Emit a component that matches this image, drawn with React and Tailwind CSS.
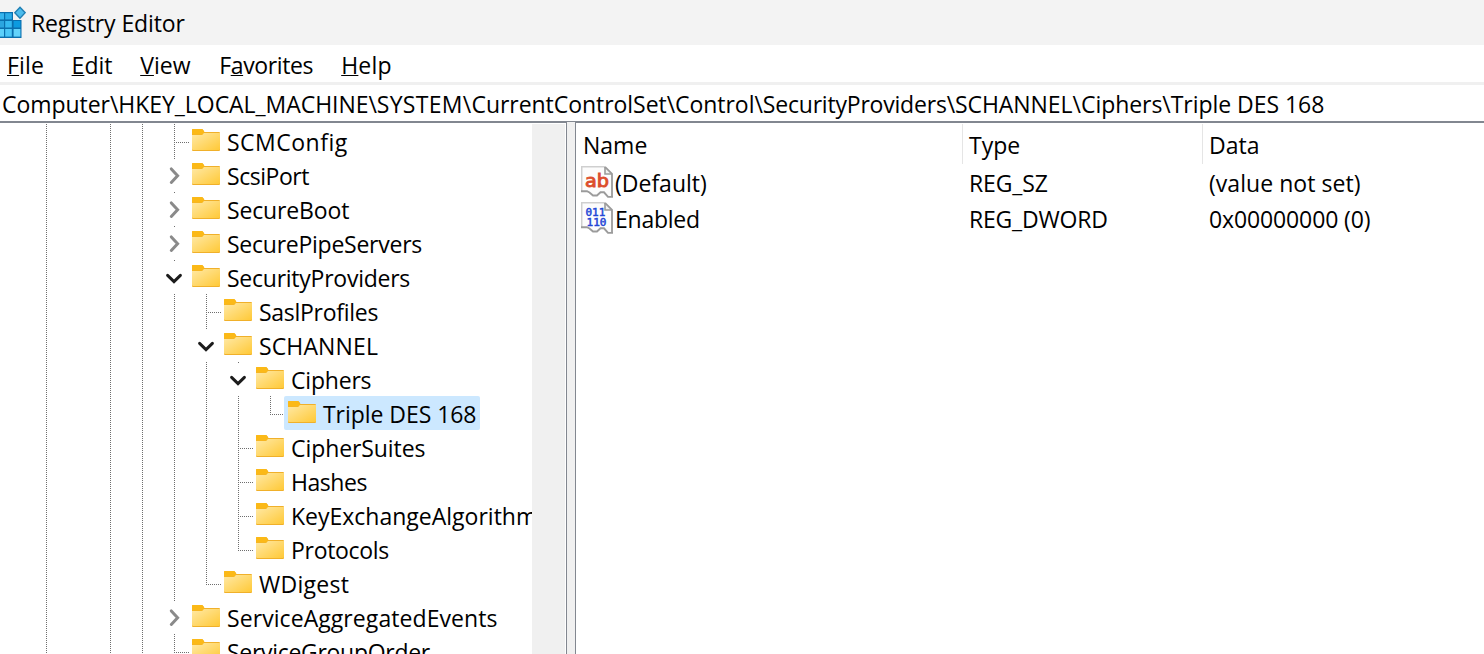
const FONT = "font-['Open_Sans','Noto_Sans',sans-serif] text-[23px] text-black";

const V_DOTS = 'bg-[repeating-linear-gradient(to_bottom,#6e6e6e_0px,#6e6e6e_1px,transparent_1px,transparent_2px)]';
const H_DOTS = 'bg-[repeating-linear-gradient(to_right,#6e6e6e_0px,#6e6e6e_1px,transparent_1px,transparent_2px)]';

// Guides, one character per 32px column:
// "|" line, " " empty, "T" branch, "L" last branch, ">" collapsed, "v" expanded
const TREE = [
  { guides: '| ||T', label: 'SCMConfig', tracking: 'tracking-[0.5px]' },
  { guides: '| ||>', label: 'ScsiPort', tracking: 'tracking-[-0.45px]' },
  { guides: '| ||>', label: 'SecureBoot', tracking: 'tracking-[-0.15px]' },
  { guides: '| ||>', label: 'SecurePipeServers', tracking: 'tracking-[-0.25px]' },
  { guides: '| ||v', label: 'SecurityProviders', tracking: 'tracking-[-0.25px]' },
  { guides: '| |||T', label: 'SaslProfiles', tracking: 'tracking-[-0.28px]' },
  { guides: '| |||v', label: 'SCHANNEL', tracking: 'tracking-[0.13px]' },
  { guides: '| ||||v', label: 'Ciphers', tracking: 'tracking-[-0.2px]' },
  { guides: '| |||||L', label: 'Triple DES 168', tracking: 'tracking-[-0.05px]', selected: true },
  { guides: '| ||||T', label: 'CipherSuites', tracking: 'tracking-[-0.08px]' },
  { guides: '| ||||T', label: 'Hashes', tracking: 'tracking-[-0.45px]' },
  { guides: '| ||||T', label: 'KeyExchangeAlgorithms', tracking: 'tracking-normal' },
  { guides: '| ||||L', label: 'Protocols', tracking: 'tracking-[-0.3px]' },
  { guides: '| |||L', label: 'WDigest', tracking: 'tracking-[0.27px]' },
  { guides: '| ||>', label: 'ServiceAggregatedEvents', tracking: 'tracking-[0.07px]' },
  { guides: '| ||L', label: 'ServiceGroupOrder', tracking: 'tracking-[-0.3px]' },
];

const MENU = [
  { pre: '', key: 'F', post: 'ile', box: 'w-[64.6px] tracking-[0.2px]' },
  { pre: '', key: 'E', post: 'dit', box: 'w-[68.6px]' },
  { pre: '', key: 'V', post: 'iew', box: 'w-[79px]' },
  { pre: 'F', key: 'a', post: 'vorites', box: 'w-[122px] tracking-[-0.36px]' },
  { pre: '', key: 'H', post: 'elp', box: 'w-[60px] tracking-[0.2px]' },
];

function RegistryLogo() {
  return (
    <svg width="26" height="32" viewBox="0 0 26 32" className="shrink-0">
      <path d="M0 6H13V14H21.5V32H0Z" fill="#0a6fae" />
      <path d="M0 7.2H4V13.4H0Z" fill="#35b5ee" />
      <path d="M5.2 7.2H11.8V13.4H5.2Z" fill="#2bade8" />
      <path d="M0 15H4V21.5H0Z" fill="#2ba5e0" />
      <path d="M5.2 15H11.8V21.5H5.2Z" fill="#35b9f1" />
      <path d="M13.6 15H20.4V21.5H13.6Z" fill="#0c9be0" />
      <path d="M0 23H4V30.6H0Z" fill="#5bd0fb" />
      <path d="M5.2 23H11.8V30.6H5.2Z" fill="#4cc8f8" />
      <path d="M13.6 23H20.4V30.6H13.6Z" fill="#63d3fb" />
      <path d="M20 1.2L25.2 6.7L20 12.2L14.8 6.7Z" fill="#4cbcec" stroke="#1f7fb4" strokeWidth="1.4" />
    </svg>
  );
}

function Folder() {
  return (
    <svg width="28" height="23" viewBox="0 0 28 23" className="mt-[5px] shrink-0">
      <defs>
        <linearGradient id="folder" x1="0" y1="0" x2="1" y2="1">
          <stop offset="0" stopColor="#ffe9a6" />
          <stop offset="1" stopColor="#ffc937" />
        </linearGradient>
      </defs>
      <path d="M0 1Q0 0 1 0H9.5Q10.5 0 11.2 1L12.5 3H27Q28 3 28 4V21Q28 22 27 22H1Q0 22 0 21Z" fill="#f0b02a" />
      <path d="M0 1Q0 0 1 0H9.5Q10.5 0 11.2 1L12.2 3L11 5.5H0Z" fill="#fbb917" />
      <path d="M0 6H9.5Q10.5 6 11.2 5L11.8 4H28V20Q28 21 27 21H1Q0 21 0 20Z" fill="url(#folder)" />
    </svg>
  );
}

function Guide({ kind }) {
  if (kind === ' ') return <span className="w-8 shrink-0" />;
  if (kind === '>' || kind === 'v') {
    return (
      <span className="flex h-[34px] w-8 shrink-0 flex-col items-center">
        <span className="h-px w-full pl-4">
          <span className="block size-px bg-[#6e6e6e]" />
        </span>
        {kind === '>' ? (
          <svg width="32" height="33" viewBox="0 0 32 33" fill="none" stroke="#8a8a8a" strokeWidth="3">
            <path d="M13.3 9.9L19.6 16.7L13.3 23.5" strokeLinecap="round" />
          </svg>
        ) : (
          <svg width="32" height="33" viewBox="0 0 32 33" fill="none" stroke="#1c1c1c" strokeWidth="3">
            <path d="M9.6 14.4L16 20.6L22.4 14.4" strokeLinecap="round" />
          </svg>
        )}
      </span>
    );
  }
  const tall = kind === 'L' ? 'h-[19px]' : 'h-[34px]';
  return (
    <span className="flex h-[34px] w-8 shrink-0 pl-4">
      <span className={`w-px shrink-0 ${tall} ${V_DOTS}`} />
      {(kind === 'T' || kind === 'L') && <span className={`mt-[18px] ml-px h-px w-[13px] shrink-0 ${H_DOTS}`} />}
    </span>
  );
}

function TreeRow({ guides, label, tracking, selected }) {
  return (
    <div className="flex h-[34px] shrink-0 pl-[30px]">
      {guides.split('').map((kind, i) => (
        <Guide key={i} kind={kind} />
      ))}
      <div className={`-ml-0.5 flex h-[34px] shrink-0 rounded-xs pr-[3.6px] pl-1 ${selected ? 'bg-[#cce8ff]' : ''}`}>
        <Folder />
        <span className={`ml-[7px] leading-[36px] whitespace-nowrap ${tracking}`}>{label}</span>
      </div>
    </div>
  );
}

function ValueIcon({ binary }) {
  return (
    <svg width="32" height="32" viewBox="0 0 32 32" className="shrink-0">
      <path d="M1 1H24L31 8V31H27L23 27H20L16 30H12L8 26H1Z" fill="#fcfcfc" />
      <path d="M0.75 25V0.75H24" fill="none" stroke="#cfcfcf" strokeWidth="1.5" />
      <path d="M24 1V8H31" fill="#f1f1f1" stroke="#9b9b9b" strokeWidth="1.6" />
      <path d="M24 0.8L31 7.8V31" fill="none" stroke="#9b9b9b" strokeWidth="1.8" />
      <path d="M0 25.2H6L8.5 26.5L12 29.5H16L19.5 26.3H23L27 30.9H32" fill="none" stroke="#9b9b9b" strokeWidth="1.9" />
      {binary ? (
        <text fill="#2346d6" stroke="#2346d6" strokeWidth="0.5" fontFamily="'DejaVu Sans Mono', monospace" fontSize="11">
          <tspan x="4.4" y="14">011</tspan>
          <tspan x="5.6" y="24">110</tspan>
        </text>
      ) : (
        <text x="4" y="21" fill="#dc4e2c" stroke="#dc4e2c" strokeWidth="0.9" fontFamily="'DejaVu Sans', sans-serif" fontSize="17.5" textLength="24" lengthAdjust="spacingAndGlyphs">ab</text>
      )}
    </svg>
  );
}

function ValueRow({ binary, name, type, data }) {
  return (
    <div className="flex h-9 items-start pl-[5px] leading-[34px] whitespace-nowrap">
      <ValueIcon binary={binary} />
      <span className="ml-0.5 w-[354px]">{name}</span>
      <span className="w-[240px]">{type}</span>
      <span>{data}</span>
    </div>
  );
}

export default function App() {
  return (
    <div className={`flex h-[654px] w-[1484px] flex-col overflow-hidden bg-white ${FONT}`}>
      <header className="flex h-[45px] shrink-0 bg-[#f3f3f3]">
        <div className="pt-1.5">
          <RegistryLogo />
        </div>
        <span className="ml-[5px] leading-[46px] tracking-[-0.12px]">Registry Editor</span>
      </header>

      <nav className="flex h-[37px] shrink-0 pl-[7px] leading-[40px]">
        {MENU.map(({ pre, key, post, box }) => (
          <span key={key} className={`shrink-0 ${box}`}>
            {pre}
            <span className="underline decoration-1 underline-offset-1 [text-decoration-skip-ink:none]">{key}</span>
            {post}
          </span>
        ))}
      </nav>

      <div className="h-[39px] shrink-0 border-t-3 border-[#f0f0f0] pl-0.5 leading-[38px] tracking-[-0.047px] whitespace-nowrap">
        {'Computer\\HKEY_LOCAL_MACHINE\\'}
        <span className="tracking-[0.28px]">{'SYSTEM\\'}</span>
        {'CurrentControlSet\\Control\\'}
        <span className="tracking-[-0.2px]">{'SecurityProviders\\'}</span>
        {'SCHANNEL\\Ciphers\\Triple DES 168'}
      </div>
      <div className="h-px shrink-0 bg-[#828790]" />

      <main className="flex min-h-0 flex-1">
        <section className="flex w-[567px] shrink-0 border-t border-r border-[#828790] pt-px">
          <div className="flex w-[532px] flex-col overflow-hidden">
            {TREE.map((row) => (
              <TreeRow key={row.label} {...row} />
            ))}
          </div>
          <div className="w-[33px] bg-[#f0f0f0]" />
        </section>
        <div className="w-2 shrink-0 bg-[#f0f0f0]" />
        <section className="flex-1 border-t border-l border-[#828790]">
          <div className="flex h-[43px] pt-px leading-[42px]">
            <span className="h-10 w-[387px] border-r border-[#e5e5e5] pl-[7px]">Name</span>
            <span className="h-10 w-[240px] border-r border-[#e5e5e5] pl-1.5">Type</span>
            <span className="pl-1.5">Data</span>
          </div>
          <ValueRow
            name="(Default)"
            type={<span className="tracking-[-0.15px]">REG_SZ</span>}
            data={<span className="tracking-[0.05px]">(value not set)</span>}
          />
          <ValueRow
            binary
            name={<span className="tracking-[-0.25px]">Enabled</span>}
            type={<span className="tracking-[-0.2px]">REG_DWORD</span>}
            data={<span className="tracking-[-0.12px]">0x00000000 (0)</span>}
          />
        </section>
      </main>
    </div>
  );
}
